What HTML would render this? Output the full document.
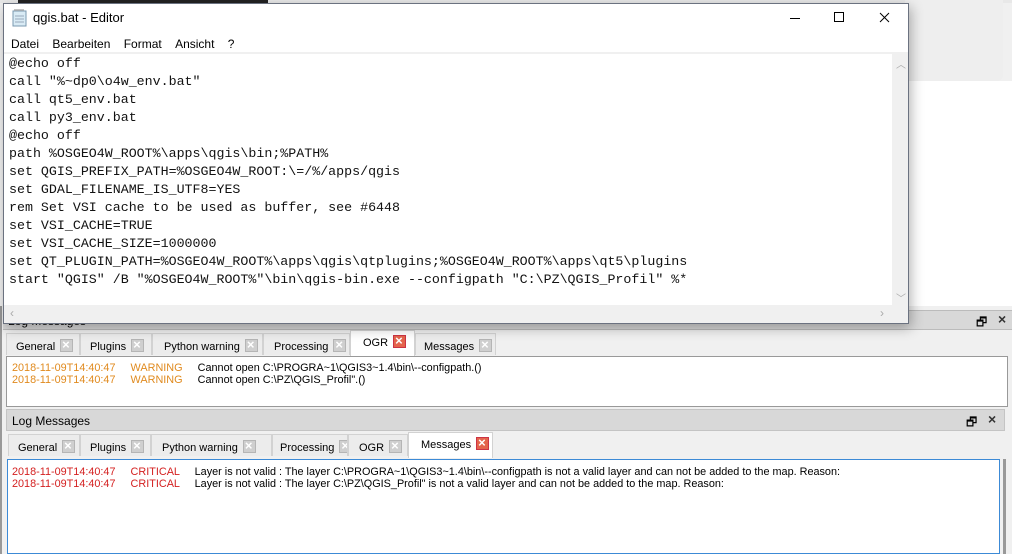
<!DOCTYPE html>
<html><head><style>
*{box-sizing:border-box;margin:0;padding:0}
body{width:1012px;height:554px;position:relative;overflow:hidden;background:#f0f0f0;font-family:"Liberation Sans",sans-serif}
.abs{position:absolute}
.tab{position:absolute;height:22px;border:1px solid #d2d2d2;border-bottom:none;background:#ececec;font-size:11px;color:#000;padding:5px 0 0 9px;white-space:nowrap;overflow:hidden}
.tab.sel{background:#fff;height:26px}
.x{display:inline-block;width:13px;height:13px;background:#cfcfcf;border:1px solid #b5b5b5;vertical-align:-2px;margin-left:5px;position:relative}
.x:before{content:"×";position:absolute;left:1px;top:-3px;color:#fff;font-size:13px;font-weight:bold}
.x.r{background:#e4644c;border-color:#c34}
.log{font-size:10.85px;line-height:12px;white-space:pre}
</style></head><body>
<div class="abs" style="left:0;top:0;width:1012px;height:3px;background:#e8e8e8"></div>
<div class="abs" style="left:18px;top:0;width:250px;height:3px;background:#222"></div>
<div class="abs" style="left:905px;top:0;width:98px;height:81px;background:#eeeeee;border-radius:0 0 6px 0"></div>
<div class="abs" style="left:905px;top:81px;width:107px;height:225px;background:#fff"></div>

<div class="abs" style="left:0;top:306px;width:1012px;height:248px;background:#f0f0f0;border-left:2px solid #999"></div>
<div class="abs" style="left:3px;top:310px;width:1009px;height:20px;background:#d8d8d8;border-top:1px solid #bbb;border-bottom:1px solid #bbb;font-size:12px;padding:3px 5px">Log Messages</div>
<div class="abs" style="left:976px;top:313px;font-size:12px">🗗</div>
<div class="abs" style="left:998px;top:311px;font-size:14px;font-weight:bold;color:#333">×</div>
<div class="tab" style="left:6px;top:333px;width:74px">General<span class="x"></span></div>
<div class="tab" style="left:80px;top:333px;width:72px">Plugins<span class="x"></span></div>
<div class="tab" style="left:152px;top:333px;width:111px;padding-left:11px">Python warning<span class="x"></span></div>
<div class="tab" style="left:263px;top:333px;width:87px;padding-left:10px">Processing<span class="x"></span></div>
<div class="tab sel" style="left:350px;top:330px;width:65px;padding:4px 0 0 12px">OGR<span class="x r"></span></div>
<div class="tab" style="left:415px;top:333px;width:81px;padding-left:8px">Messages<span class="x"></span></div>
<div class="abs" style="left:6px;top:356px;width:1002px;height:51px;background:#fff;border:1px solid #999"></div>
<div class="abs log" style="left:12px;top:362px;color:#e08a1e">2018-11-09T14:40:47     WARNING     <span style="color:#000">Cannot open C:\PROGRA~1\QGIS3~1.4\bin\--configpath.()</span>
2018-11-09T14:40:47     WARNING     <span style="color:#000">Cannot open C:\PZ\QGIS_Profil".()</span></div>

<div class="abs" style="left:6px;top:409px;width:999px;height:22px;background:#d8d8d8;border:1px solid #c4c4c4;font-size:12px;padding:4px 5px">Log Messages</div>
<div class="abs" style="left:966px;top:413px;font-size:12px">🗗</div>
<div class="abs" style="left:988px;top:411px;font-size:14px;font-weight:bold;color:#333">×</div>
<div class="tab" style="left:8px;top:434px;width:72px">General<span class="x"></span></div>
<div class="tab" style="left:80px;top:434px;width:71px">Plugins<span class="x"></span></div>
<div class="tab" style="left:151px;top:434px;width:121px;padding-left:10px">Python warning<span class="x"></span></div>
<div class="tab" style="left:272px;top:434px;width:76px;padding-left:7px">Processing<span class="x"></span></div>
<div class="tab" style="left:348px;top:434px;width:60px;padding-left:10px">OGR<span class="x"></span></div>
<div class="tab sel" style="left:408px;top:432px;width:85px;padding:4px 0 0 12px">Messages<span class="x r"></span></div>
<div class="abs" style="left:7px;top:459px;width:993px;height:95px;background:#fff;border:1px solid #3c8ad6"></div>
<div class="abs" style="left:1003px;top:459px;width:3px;height:95px;background:#999"></div>
<div class="abs log" style="left:12px;top:466px;color:#d42020">2018-11-09T14:40:47     CRITICAL     <span style="color:#000">Layer is not valid : The layer C:\PROGRA~1\QGIS3~1.4\bin\--configpath is not a valid layer and can not be added to the map. Reason:</span>
2018-11-09T14:40:47     CRITICAL     <span style="color:#000">Layer is not valid : The layer C:\PZ\QGIS_Profil" is not a valid layer and can not be added to the map. Reason:</span></div>

<div class="abs" style="left:3px;top:3px;width:906px;height:321px;background:#fff;border:1px solid #6b7280;box-shadow:2px 4px 12px rgba(0,0,0,.3)"></div>
<svg class="abs" style="left:12px;top:9px" width="16" height="18"><rect x="1" y="2" width="13" height="15" fill="#d9ebf5" stroke="#7a98b0"/><path d="M3 2v-2M5 2v-2M7 2v-2M9 2v-2M11 2v-2" stroke="#888"/><path d="M3 7h9M3 10h9M3 13h9" stroke="#9ab"/></svg>
<div class="abs" style="left:33px;top:10px;font-size:13px">qgis.bat - Editor</div>
<svg class="abs" style="left:780px;top:8px" width="120" height="22"><path d="M10 10.5h10" stroke="#000"/><rect x="54.5" y="4.5" width="9" height="9" fill="none" stroke="#000"/><path d="M100 5l9 9M109 5l-9 9" stroke="#000"/></svg>
<div class="abs" style="left:11px;top:37px;font-size:12px">Datei&nbsp;&nbsp;&nbsp;&nbsp;Bearbeiten&nbsp;&nbsp;&nbsp;&nbsp;Format&nbsp;&nbsp;&nbsp;&nbsp;Ansicht&nbsp;&nbsp;&nbsp;&nbsp;?</div>
<div class="abs" style="left:4px;top:52px;width:904px;height:2px;background:#f0f0f0"></div>
<div class="abs" style="left:892px;top:54px;width:16px;height:269px;background:#f0f0f0"></div>
<div class="abs" style="left:4px;top:305px;width:904px;height:18px;background:#f0f0f0"></div>
<div class="abs" style="left:896px;top:56px;font-size:10px;color:#aaa">︿</div>
<div class="abs" style="left:896px;top:290px;font-size:10px;color:#aaa">﹀</div>
<div class="abs" style="left:10px;top:306px;font-size:12px;color:#aaa">‹</div>
<div class="abs" style="left:880px;top:306px;font-size:12px;color:#aaa">›</div>
<pre class="abs" style="left:9px;top:55px;font-family:'Liberation Mono',monospace;font-size:13.3px;line-height:18px;color:#111">@echo off
call "%~dp0\o4w_env.bat"
call qt5_env.bat
call py3_env.bat
@echo off
path %OSGEO4W_ROOT%\apps\qgis\bin;%PATH%
set QGIS_PREFIX_PATH=%OSGEO4W_ROOT:\=/%/apps/qgis
set GDAL_FILENAME_IS_UTF8=YES
rem Set VSI cache to be used as buffer, see #6448
set VSI_CACHE=TRUE
set VSI_CACHE_SIZE=1000000
set QT_PLUGIN_PATH=%OSGEO4W_ROOT%\apps\qgis\qtplugins;%OSGEO4W_ROOT%\apps\qt5\plugins
start "QGIS" /B "%OSGEO4W_ROOT%"\bin\qgis-bin.exe --configpath "C:\PZ\QGIS_Profil" %*</pre>
</body></html>
